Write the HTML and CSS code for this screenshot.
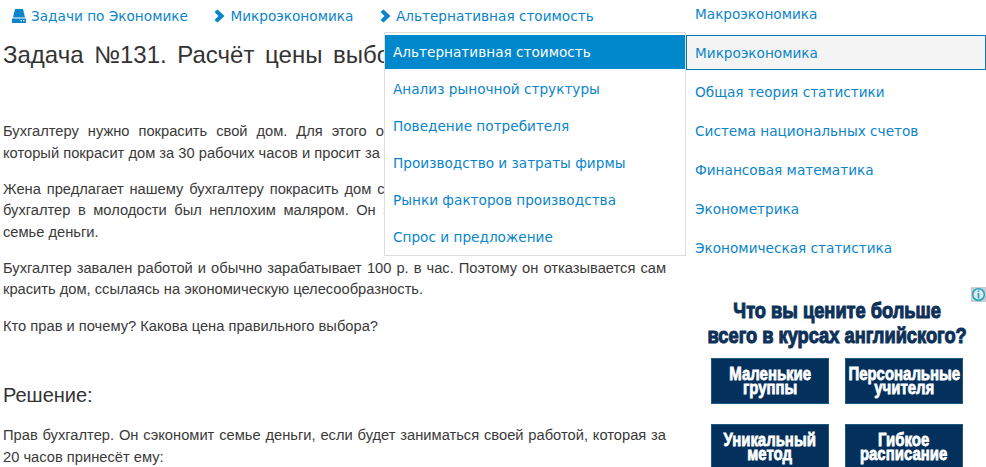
FILE: index.html
```html
<!DOCTYPE html>
<html lang="ru">
<head>
<meta charset="utf-8">
<title>Задача №131</title>
<link rel="stylesheet" href="styles.css">
</head>
<body>
<div class="page">
  <main class="main">
    <nav class="crumbs">
      <a class="crumb">
        <svg class="ico-drive" viewBox="0 0 14 14" width="14" height="14"><path d="M3 0h8l2 8.500H1z" fill="#0a85cc"/><path d="M0 9.500h14V14H0z" fill="#0a85cc"/><path d="M8.500 11h1.500v1.200H8.500zM11 11h1.500v1.200H11z" fill="#fff"/></svg>
        Задачи по Экономике</a>
      <a class="crumb">
        <svg class="ico-chev" viewBox="0 0 11 14" width="11" height="14"><path d="M0.500 3 3.500 0.500 10.500 7l-7 6.500-3-2.500L4.500 7z" fill="#0a85cc"/></svg>
        Микроэкономика</a>
      <a class="crumb">
        <svg class="ico-chev" viewBox="0 0 11 14" width="11" height="14"><path d="M0.500 3 3.500 0.500 10.500 7l-7 6.500-3-2.500L4.500 7z" fill="#0a85cc"/></svg>
        Альтернативная стоимость</a>
    </nav>
    <h1 class="title">Задача №131. Расчёт цены выбора</h1>
    <p class="para">Бухгалтеру нужно покрасить свой дом. Для этого он может нанять проверенного маляра, который покрасит дом за 30 рабочих часов и просит за работу 2000 р.</p>
    <p class="para">Жена предлагает нашему бухгалтеру покрасить дом самостоятельно, потому что раньше наш бухгалтер в молодости был неплохим маляром. Он за 20 часов покрасит дом и сэкономит семье деньги.</p>
    <p class="para">Бухгалтер завален работой и обычно зарабатывает 100 р. в час. Поэтому он отказывается сам красить дом, ссылаясь на экономическую целесообразность.</p>
    <p class="para">Кто прав и почему? Какова цена правильного выбора?</p>
    <h2 class="sub">Решение:</h2>
    <p class="para">Прав бухгалтер. Он сэкономит семье деньги, если будет заниматься своей работой, которая за 20 часов принесёт ему:</p>
  </main>
  <aside class="side">
    <ul class="side-list">
      <li class="side-item">Макроэкономика</li>
      <li class="side-item side-item-on">Микроэкономика</li>
      <li class="side-item">Общая теория статистики</li>
      <li class="side-item">Система национальных счетов</li>
      <li class="side-item">Финансовая математика</li>
      <li class="side-item">Эконометрика</li>
      <li class="side-item">Экономическая статистика</li>
    </ul>
    <div class="ad">
      <div class="ad-info"><svg viewBox="0 0 16 16" width="15" height="15"><circle cx="8" cy="8" r="6.200" fill="#e4e8ea" stroke="#1aa5c8" stroke-width="1.600"/><path d="M7.100 3.800h1.800v1.600H7.100zM7.100 6.500h1.800v5.700H7.100z" fill="#1aa5c8"/></svg></div>
      <div class="ad-q"><span class="ad-squeeze">Что вы цените больше<br>всего в курсах английского?</span></div>
      <div class="ad-grid">
        <div class="ad-btn"><span class="ad-squeeze">Маленькие<br>группы</span></div>
        <div class="ad-btn"><span class="ad-squeeze">Персональные<br>учителя</span></div>
        <div class="ad-btn"><span class="ad-squeeze">Уникальный<br>метод</span></div>
        <div class="ad-btn"><span class="ad-squeeze">Гибкое<br>расписание</span></div>
      </div>
    </div>
  </aside>
</div>
<ul class="menu">
  <li class="menu-item menu-item-on">Альтернативная стоимость</li>
  <li class="menu-item">Анализ рыночной структуры</li>
  <li class="menu-item">Поведение потребителя</li>
  <li class="menu-item">Производство и затраты фирмы</li>
  <li class="menu-item">Рынки факторов производства</li>
  <li class="menu-item">Спрос и предложение</li>
</ul>
</body>
</html>
```
FILE: styles.css
```css
html, body { margin: 0; padding: 0; height: 467px; overflow: hidden; background: #fff; }
body { font-family: "Liberation Sans", Arial, sans-serif; color: #333; position: relative; }
.page { display: grid; grid-template-columns: 686px 300px; height: 467px; overflow: hidden; }
.main { padding: 0 20px 0 3px; min-width: 0; }
.crumbs { display: flex; height: 32px; align-items: center; gap: 26.5px; padding-left: 9px; font: 13.65px/16px "DejaVu Sans", Verdana, sans-serif; color: #0a85cc; }
.crumb { display: flex; align-items: center; gap: 5px; white-space: nowrap; }
.title { margin: 8px 0 0; font-size: 24px; line-height: 30px; font-weight: 400; word-spacing: 4px; color: #333; white-space: nowrap; }
.para { margin: 0 0 14.7px; font-size: 14.7px; line-height: 21.5px; text-align: justify; color: #3a3a3a; }
.title + .para { margin-top: 51px; }
.sub { margin: 46px 0 18px; font-size: 20px; line-height: 24px; font-weight: 400; color: #333; }
.side { font: 13.65px/16px "DejaVu Sans", Verdana, sans-serif; color: #0a85cc; }
.side-list { list-style: none; margin: 0; padding: 0; }
.side-item { height: 39px; box-sizing: border-box; padding: 7px 9px 6px; line-height: 16px; }
.side-item:first-child { height: 35px; padding-top: 6px; }
.side-item-on { height: 35px; margin-bottom: 7px; padding: 9px 8px; border: 1px solid #0a78b4; background: #f4f4f4; }
.ad { margin-top: 15px; position: relative; }
.ad-info { position: absolute; right: 0; top: 0; width: 15px; height: 15px; background: #ccc; display: flex; align-items: center; justify-content: center; }
.ad-q { padding: 11px 0 0; text-align: center; font: 900 22px/25px "Liberation Sans", sans-serif; color: #0d3159; -webkit-text-stroke: 1.1px #0d3159; }
.ad-squeeze { display: inline-block; transform: scaleX(0.83); white-space: nowrap; }
.ad-q .ad-squeeze { transform: translateX(-5px) scaleX(0.83); }
.ad-grid { display: grid; grid-template-columns: 118px 118px; grid-auto-rows: 46px; column-gap: 16px; row-gap: 20px; margin: 10px 0 0 25px; overflow: hidden; }
.ad-btn { box-sizing: border-box; border: 1px solid #1b5a7c; background: #03305c; color: #fff; display: flex; align-items: center; justify-content: center; text-align: center; font: 700 18px/14px "Liberation Sans", sans-serif; -webkit-text-stroke: 0.8px #fff; }
.menu { position: absolute; left: 384px; top: 32px; width: 300px; margin: 0; padding: 2px 0 0; list-style: none; background: #fff; border: 1px solid #ddd; font: 13.65px/16px "DejaVu Sans", Verdana, sans-serif; color: #0a85cc; height: 220px; }
.menu-item { height: 37px; box-sizing: border-box; padding: 9px 8px; white-space: nowrap; }
.menu-item-on { height: 34px; margin-bottom: 3px; padding-top: 9px; background: #0088cc; color: #fff; }
```
